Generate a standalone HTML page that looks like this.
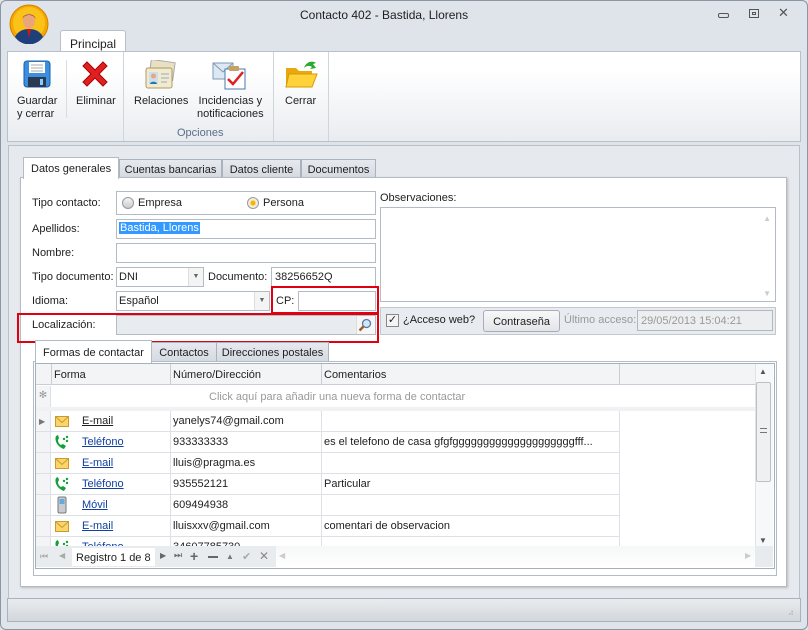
<!DOCTYPE html>
<html><head><meta charset="utf-8"><style>
*{box-sizing:border-box;margin:0;padding:0}
body{width:808px;height:630px;background:#dfe4ea;font-family:"Liberation Sans",sans-serif;font-size:11px;color:#1e1e1e;position:relative;overflow:hidden;white-space:nowrap}
.a{position:absolute}
.in{position:absolute;background:#fff;border:1px solid #b3bcc6}
.lbl{position:absolute;font-size:11px}
.tab{position:absolute;background:linear-gradient(#e6e9ee,#d5dae1);border:1px solid #aab3bd;border-bottom:none;text-align:center;padding-top:4px}
.row{position:absolute;left:36px;width:584px;height:21px;border-bottom:1px solid #dde1e6}
.row div{position:absolute;top:4px}
.lk{color:#1040a0;text-decoration:underline}
.vl{position:absolute;top:0;bottom:0;width:1px;background:#dde1e6}
</style></head><body>
<div class="a" style="left:0;top:0;width:808px;height:630px;border:1px solid #8c96a2;border-radius:6px"></div>
<div class="a" style="left:300px;top:8px;font-size:12px">Contacto 402 - Bastida, Llorens</div>
<div class="a" style="left:718px;top:13px;width:11px;height:5px;border:1px solid #555;border-radius:2px"></div>
<div class="a" style="left:749px;top:9px;width:10px;height:9px;border:1px solid #555"><div style="margin:2px;width:4px;height:3px;border:1px solid #555"></div></div>
<div class="a" style="left:778px;top:5px;font-size:13px;color:#555">✕</div>
<svg class="a" style="left:9px;top:4px" width="40" height="40" viewBox="0 0 40 40"><circle cx="20" cy="20" r="19" fill="#f6a800" stroke="#d08000"/><circle cx="20" cy="19" r="16" fill="#fbc21a"/><path d="M6 33c3-6 8-8 14-8s11 2 14 8a17 17 0 0 1-28 0z" fill="#1f3f7a"/><path d="M18 25l2 9 2-9z" fill="#d0141a"/><ellipse cx="20" cy="17" rx="6" ry="7.5" fill="#e9a67a"/><path d="M13.5 15c0-6 13-6 13 0-1-3-4-4-6.5-4s-5.5 1-6.5 4z" fill="#7a3a1a"/></svg>
<div class="a" style="left:60px;top:30px;width:66px;height:22px;background:#fff;border:1px solid #b8c0ca;border-bottom:none;border-radius:3px 3px 0 0;text-align:center;padding-top:6px;font-size:12px">Principal</div>
<div class="a" style="left:7px;top:51px;width:794px;height:91px;background:linear-gradient(#fff,#fff 20%,#e9ecf0);border:1px solid #b8c0ca"></div>
<div class="a" style="left:66px;top:60px;width:1px;height:58px;background:#d8dde3"></div>
<div class="a" style="left:123px;top:52px;width:1px;height:89px;background:#cfd5dc"></div>
<div class="a" style="left:273px;top:52px;width:1px;height:89px;background:#cfd5dc"></div>
<div class="a" style="left:328px;top:52px;width:1px;height:89px;background:#cfd5dc"></div>
<svg class="a" style="left:23px;top:60px" width="28" height="28"><rect x="1" y="1" width="26" height="26" rx="3" fill="#3b8ee0" stroke="#1a5fa8"/><rect x="6" y="2" width="16" height="11" fill="#fff"/><path d="M8 5h12M8 8h12M8 11h12" stroke="#aaa"/><rect x="5" y="17" width="18" height="10" fill="#2a3a50"/><rect x="17" y="19" width="3" height="6" fill="#8cf"/></svg>
<svg class="a" style="left:79px;top:58px" width="32" height="32"><path d="M4 8l4-4 8 8 8-8 4 4-8 8 8 8-4 4-8-8-8 8-4-4 8-8z" fill="#e02020" stroke="#a00"/></svg>
<svg class="a" style="left:144px;top:60px" width="32" height="30"><rect x="6" y="1" width="24" height="18" fill="#e8e0c0" stroke="#aaa" transform="rotate(8 18 10)"/><rect x="2" y="8" width="26" height="20" rx="2" fill="#f0ead0" stroke="#b09a60"/><rect x="5" y="12" width="9" height="12" fill="#cde"/><circle cx="9.5" cy="16" r="2.5" fill="#e9a67a"/><path d="M6 24c0-3 7-3 7 0z" fill="#27a"/><path d="M17 14h8M17 18h8M17 22h6" stroke="#9ab"/></svg>
<svg class="a" style="left:212px;top:57px" width="34" height="34"><rect x="1" y="6" width="20" height="16" fill="#dde8f2" stroke="#7a9ab8"/><path d="M1 6l10 9 10-9" fill="none" stroke="#7a9ab8"/><rect x="13" y="12" width="20" height="20" fill="#fff" stroke="#4a7ab0"/><rect x="17" y="9" width="10" height="5" rx="1" fill="#c8a060"/><path d="M16 22l5 5 10-12" fill="none" stroke="#e02020" stroke-width="2.5"/></svg>
<svg class="a" style="left:284px;top:58px" width="34" height="32"><path d="M2 10h10l3 3h13v16H2z" fill="#e8a810"/><path d="M5 16h28l-5 13H2z" fill="#ffd23a" stroke="#d89a00"/><path d="M20 10c2-6 8-8 12-5l-3 1 3 4-6 1 2-2c-3-2-6-1-8 1z" fill="#2aa830"/></svg>
<div class="a" style="left:17px;top:95px;line-height:13px">Guardar<br>y cerrar</div>
<div class="a" style="left:76px;top:95px">Eliminar</div>
<div class="a" style="left:134px;top:95px">Relaciones</div>
<div class="a" style="left:197px;top:95px;line-height:13px;text-align:center">Incidencias y<br>notificaciones</div>
<div class="a" style="left:285px;top:95px">Cerrar</div>
<div class="a" style="left:177px;top:127px;color:#5a6e8a">Opciones</div>
<div class="a" style="left:8px;top:145px;width:792px;height:454px;border:1px solid #b8c0ca;background:#e6e9ed"></div>
<div class="tab" style="left:119px;top:159px;width:103px;height:19px">Cuentas bancarias</div>
<div class="tab" style="left:222px;top:159px;width:79px;height:19px">Datos cliente</div>
<div class="tab" style="left:301px;top:159px;width:75px;height:19px">Documentos</div>
<div class="a" style="left:20px;top:177px;width:767px;height:410px;background:#fff;border:1px solid #b3bcc6;box-shadow:1px 1px 2px #bbb"></div>
<div class="a" style="left:23px;top:157px;width:96px;height:22px;background:#fff;border:1px solid #b3bcc6;border-bottom:none;padding:5px 0 0 7px">Datos generales</div>
<div class="lbl" style="left:32px;top:197px">Tipo contacto:</div>
<div class="in" style="left:116px;top:191px;width:260px;height:24px"></div>
<div class="a" style="left:122px;top:197px;width:12px;height:12px;border-radius:50%;border:1px solid #999;background:linear-gradient(#f4f4f4,#ccc)"></div>
<div class="lbl" style="left:138px;top:197px">Empresa</div>
<div class="a" style="left:247px;top:197px;width:12px;height:12px;border-radius:50%;border:1px solid #999;background:radial-gradient(#f7b500 30%,#fde9b0 40%,#eee 60%)"></div>
<div class="lbl" style="left:263px;top:197px">Persona</div>
<div class="lbl" style="left:32px;top:223px">Apellidos:</div>
<div class="in" style="left:116px;top:219px;width:260px;height:20px"><span style="background:#3399ff;color:#fff;margin-left:2px;padding:0 1px;position:relative;top:2px">Bastida, Llorens</span></div>
<div class="lbl" style="left:32px;top:247px">Nombre:</div>
<div class="in" style="left:116px;top:243px;width:260px;height:20px"></div>
<div class="lbl" style="left:32px;top:271px">Tipo documento:</div>
<div class="in" style="left:116px;top:267px;width:88px;height:20px;padding:3px 2px">DNI<div class="a" style="right:0;top:0;width:15px;height:18px;border-left:1px solid #ddd;background:#f4f4f4;color:#666;font-size:7px;text-align:center;padding-top:5px">▼</div></div>
<div class="lbl" style="left:208px;top:271px">Documento:</div>
<div class="in" style="left:271px;top:267px;width:105px;height:20px;padding:3px 3px">38256652Q</div>
<div class="lbl" style="left:32px;top:295px">Idioma:</div>
<div class="in" style="left:116px;top:291px;width:154px;height:20px;padding:3px 2px">Español<div class="a" style="right:0;top:0;width:15px;height:18px;border-left:1px solid #ddd;background:#f4f4f4;color:#666;font-size:7px;text-align:center;padding-top:5px">▼</div></div>
<div class="lbl" style="left:276px;top:295px">CP:</div>
<div class="in" style="left:298px;top:291px;width:78px;height:20px"></div>
<div class="a" style="left:271px;top:286px;width:108px;height:28px;border:2px solid #e00010"></div>
<div class="lbl" style="left:32px;top:319px">Localización:</div>
<div class="in" style="left:116px;top:315px;width:260px;height:20px;background:#e9ecef"><div class="a" style="right:0;top:0;width:19px;height:18px;background:#f6f6f6;border-left:1px solid #ddd"></div><svg class="a" style="right:3px;top:2px" width="14" height="14"><circle cx="8.5" cy="5.5" r="4" fill="#cde8ff" stroke="#5a7a9a" stroke-width="1.3"/><path d="M5.5 8.5L1.5 12.5" stroke="#a06020" stroke-width="2.5"/></svg></div>
<div class="a" style="left:17px;top:313px;width:362px;height:30px;border:2px solid #e00010"></div>
<div class="lbl" style="left:380px;top:192px">Observaciones:</div>
<div class="in" style="left:380px;top:207px;width:396px;height:95px"><div class="a" style="right:4px;top:6px;color:#ccc;font-size:8px">▲</div><div class="a" style="right:4px;bottom:3px;color:#ccc;font-size:8px">▼</div></div>
<div class="a" style="left:380px;top:307px;width:396px;height:28px;border:1px solid #c0c8d0;background:#e8ebef"></div>
<div class="a" style="left:386px;top:314px;width:13px;height:13px;border:1px solid #888;background:#f4f4f4;font-size:11px;line-height:11px;text-align:center">✓</div>
<div class="lbl" style="left:403px;top:314px">¿Acceso web?</div>
<div class="a" style="left:483px;top:310px;width:77px;height:22px;border:1px solid #aab;border-radius:3px;background:linear-gradient(#f8f8f8,#e2e5e9);text-align:center;padding-top:5px">Contraseña</div>
<div class="lbl" style="left:564px;top:314px;color:#999">Último acceso:</div>
<div class="a" style="left:637px;top:310px;width:136px;height:21px;border:1px solid #b0b8c0;background:#eceef0;color:#999;padding:4px 3px">29/05/2013 15:04:21</div>
<div class="tab" style="left:151px;top:342px;width:66px;height:20px">Contactos</div>
<div class="tab" style="left:216px;top:342px;width:113px;height:20px">Direcciones postales</div>
<div class="a" style="left:33px;top:361px;width:744px;height:215px;border:1px solid #b3bcc6;background:#fff"></div>
<div class="a" style="left:35px;top:340px;width:117px;height:23px;background:#fff;border:1px solid #b3bcc6;border-bottom:none;padding:6px 0 0 7px">Formas de contactar</div>
<div class="a" style="left:35px;top:363px;width:740px;height:206px;border:1px solid #a6b0bb;background:#fff"></div>
<div class="a" style="left:36px;top:364px;width:719px;height:21px;background:#f3f4f6;border-bottom:1px solid #c8ced6"></div>
<div class="a" style="left:51px;top:364px;width:1px;height:21px;background:#c8ced6"></div>
<div class="a" style="left:170px;top:364px;width:1px;height:21px;background:#c8ced6"></div>
<div class="a" style="left:321px;top:364px;width:1px;height:21px;background:#c8ced6"></div>
<div class="a" style="left:619px;top:364px;width:1px;height:21px;background:#c8ced6"></div>
<div class="lbl" style="left:54px;top:369px">Forma</div>
<div class="lbl" style="left:173px;top:369px">Número/Dirección</div>
<div class="lbl" style="left:324px;top:369px">Comentarios</div>
<div class="a" style="left:36px;top:386px;width:15px;height:21px;background:#f3f4f6;border-right:1px solid #dde1e6;color:#999;font-size:10px;text-align:center;padding-top:4px">✻</div>
<div class="lbl" style="left:209px;top:391px;color:#999">Click aquí para añadir una nueva forma de contactar</div>
<div class="a" style="left:36px;top:407px;width:719px;height:4px;background:#f0f1f3"></div>
<div class="a" style="left:36px;top:411px;width:584px;height:135px;overflow:hidden">
 <div class="a" style="left:0;top:0;width:15px;height:135px;background:#f3f4f6;border-right:1px solid #dde1e6"></div>
 <div class="vl" style="left:134px"></div><div class="vl" style="left:285px"></div><div class="vl" style="left:583px"></div>
</div>
<div class="a" style="left:39px;top:417px;color:#777;font-size:8px">▶</div>
<svg width="0" height="0" style="position:absolute"><defs>
<symbol id="m" viewBox="0 0 14 11"><rect x=".5" y=".5" width="13" height="10" fill="#fbd46a" stroke="#c89a30"/><path d="M.5.5l6.5 6 6.5-6" fill="none" stroke="#c89a30"/></symbol>
<symbol id="p" viewBox="0 0 16 16"><path d="M2 2c-2 5 2 11 8 13l2-3-3-2-2 1c-2-1-3-3-3-5l1-2-1-3z" fill="#14a03a"/><circle cx="10" cy="5" r="1.2" fill="#14a03a"/><circle cx="13" cy="3" r="1.2" fill="#14a03a"/><circle cx="13" cy="7" r="1.2" fill="#14a03a"/></symbol>
<symbol id="c" viewBox="0 0 10 18"><rect x="1" y="1" width="8" height="16" rx="1.5" fill="#c8ccd0" stroke="#777"/><rect x="2.5" y="3" width="5" height="5" fill="#6ad"/></symbol></defs></svg>
<div class="row" style="top:411px"><svg class="a" style="left:19px;top:5px" width="14" height="11"><use href="#m"/></svg><div style="left:46px;text-decoration:underline">E-mail</div><div style="left:137px">yanelys74@gmail.com</div></div>
<div class="row" style="top:432px"><svg class="a" style="left:18px;top:2px" width="16" height="16"><use href="#p"/></svg><div class="lk" style="left:46px">Teléfono</div><div style="left:137px">933333333</div><div style="left:288px">es el telefono de casa gfgfggggggggggggggggggggfff...</div></div>
<div class="row" style="top:453px"><svg class="a" style="left:19px;top:5px" width="14" height="11"><use href="#m"/></svg><div class="lk" style="left:46px">E-mail</div><div style="left:137px">lluis@pragma.es</div></div>
<div class="row" style="top:474px"><svg class="a" style="left:18px;top:2px" width="16" height="16"><use href="#p"/></svg><div class="lk" style="left:46px">Teléfono</div><div style="left:137px">935552121</div><div style="left:288px">Particular</div></div>
<div class="row" style="top:495px"><svg class="a" style="left:21px;top:1px" width="10" height="18"><use href="#c"/></svg><div class="lk" style="left:46px">Móvil</div><div style="left:137px">609494938</div></div>
<div class="row" style="top:516px"><svg class="a" style="left:19px;top:5px" width="14" height="11"><use href="#m"/></svg><div class="lk" style="left:46px">E-mail</div><div style="left:137px">lluisxxv@gmail.com</div><div style="left:288px">comentari de observacion</div></div>
<div class="row" style="top:537px;height:9px;overflow:hidden;border:none"><svg class="a" style="left:18px;top:2px" width="16" height="16"><use href="#p"/></svg><div class="lk" style="left:46px">Teléfono</div><div style="left:137px">34607785730</div></div>
<div class="a" style="left:755px;top:364px;width:18px;height:182px;background:#f7f8f9;border-left:1px solid #e0e3e7"></div>
<div class="a" style="left:759px;top:367px;font-size:8px;color:#555">▲</div>
<div class="a" style="left:756px;top:382px;width:15px;height:100px;border:1px solid #b8c0c8;border-radius:2px;background:#eef0f2"></div>
<div class="a" style="left:760px;top:428px;width:7px;height:5px;border-top:1px solid #777;border-bottom:1px solid #777"></div>
<div class="a" style="left:759px;top:536px;font-size:8px;color:#555">▼</div>
<div class="a" style="left:36px;top:546px;width:719px;height:21px;background:linear-gradient(#f6f7f8,#fff)"></div>
<div class="a" style="left:755px;top:546px;width:18px;height:21px;background:#e8ebee"></div>
<div class="a" style="left:36px;top:546px;width:240px;height:21px;background:#e9ecef"></div>
<div class="a" style="left:72px;top:548px;width:83px;height:18px;background:#fff"></div>
<div class="a" style="left:40px;top:551px;font-size:9px;color:#aaa">⏮</div>
<div class="a" style="left:59px;top:551px;font-size:8px;color:#aaa">◀</div>
<div class="lbl" style="left:76px;top:552px">Registro 1 de 8</div>
<div class="a" style="left:160px;top:551px;font-size:8px;color:#666">▶</div>
<div class="a" style="left:174px;top:550px;font-size:9px;color:#666">⏭</div>
<div class="a" style="left:190px;top:548px;font-size:14px;font-weight:bold;color:#666">+</div>
<div class="a" style="left:208px;top:556px;width:10px;height:2px;background:#666"></div>
<div class="a" style="left:226px;top:552px;font-size:8px;color:#777">▲</div>
<div class="a" style="left:242px;top:550px;font-size:11px;color:#aaa">✔</div>
<div class="a" style="left:259px;top:549px;font-size:12px;color:#888">✕</div>
<div class="a" style="left:279px;top:551px;font-size:8px;color:#ccc">◀</div>
<div class="a" style="left:745px;top:551px;font-size:8px;color:#ccc">▶</div>
<div class="a" style="left:7px;top:598px;width:794px;height:24px;background:linear-gradient(#e9ecef,#d2d7dc);border:1px solid #aab3bd"></div>
<div class="a" style="left:788px;top:608px;font-size:8px;color:#999;letter-spacing:-1px">⠴</div>
</body></html>
